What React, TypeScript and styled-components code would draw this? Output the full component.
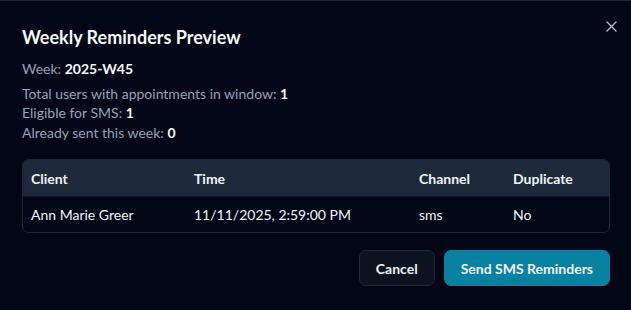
import styled, { createGlobalStyle } from "styled-components";

const Global = createGlobalStyle`
  html, body {
    margin: 0;
    padding: 0;
    background: #020617;
  }
  body {
    font-family: Lato, "Noto Sans", sans-serif;
    color: #f1f5f9;
  }
`;

const Dialog = styled.div`
  position: relative;
  box-sizing: border-box;
  width: 631px;
  height: 310px;
  background: #030617;
  border-top: 1px solid #1e2433;
  padding: 23px 21px 0 22px;
`;

const Close = styled.button`
  position: absolute;
  top: 18px;
  right: 13px;
  width: 14px;
  height: 14px;
  padding: 0;
  border: 0;
  background: transparent;
  color: #b8bfcc;
  display: flex;
  align-items: center;
  justify-content: center;
`;

const Title = styled.h2`
  margin: 0;
  font-size: 18px;
  font-weight: 700;
  line-height: 26px;
  color: #f8fafc;
`;

const Line = styled.p<{ $gap?: number }>`
  margin: ${(p) => p.$gap ?? 0}px 0 0;
  font-size: 14px;
  line-height: 19.5px;
  color: #94a3b8;

  b {
    color: #f8fafc;
    font-weight: 700;
  }
`;

const Table = styled.div`
  margin-top: 17px;
  border: 1px solid #1e293b;
  border-radius: 7px;
  overflow: hidden;
`;

const Row = styled.div<{ $head?: boolean }>`
  display: grid;
  grid-template-columns: 163px 225px 94px 1fr;
  height: ${(p) => (p.$head ? 36 : 35)}px;
  align-items: center;
  background: ${(p) => (p.$head ? "#1e293b" : "transparent")};
  border-bottom: ${(p) => (p.$head ? "1px solid #0f172a" : "none")};
  font-size: 14px;
  font-weight: ${(p) => (p.$head ? 700 : 400)};
  color: #f1f5f9;
`;

const Cell = styled.div`
  padding-left: 8px;
  white-space: nowrap;
`;

const Footer = styled.div`
  display: flex;
  justify-content: flex-end;
  gap: 9px;
  margin-top: 17px;
`;

const Button = styled.button<{ $primary?: boolean }>`
  height: 36px;
  padding: 0 16px;
  border-radius: 7px;
  font-family: inherit;
  font-size: 14px;
  font-weight: 700;
  color: #f1f5f9;
  border: 1px solid ${(p) => (p.$primary ? "#0882a0" : "#1e293b")};
  background: ${(p) => (p.$primary ? "#0882a0" : "#0c1220")};
`;

export default function App() {
  return (
    <>
      <Global />
      <Dialog>
        <Close aria-label="Close">
          <svg width="11" height="11" viewBox="0 0 11 11" fill="none">
            <path d="M1 1L10 10M10 1L1 10" stroke="currentColor" strokeWidth="1.4" strokeLinecap="round" />
          </svg>
        </Close>
        <Title>Weekly Reminders Preview</Title>
        <Line $gap={9}>
          Week: <b>2025-W45</b>
        </Line>
        <Line $gap={5}>
          Total users with appointments in window: <b>1</b>
        </Line>
        <Line>
          Eligible for SMS: <b>1</b>
        </Line>
        <Line>
          Already sent this week: <b>0</b>
        </Line>
        <Table>
          <Row $head>
            <Cell>Client</Cell>
            <Cell>Time</Cell>
            <Cell>Channel</Cell>
            <Cell>Duplicate</Cell>
          </Row>
          <Row>
            <Cell>Ann Marie Greer</Cell>
            <Cell>11/11/2025, 2:59:00 PM</Cell>
            <Cell>sms</Cell>
            <Cell>No</Cell>
          </Row>
        </Table>
        <Footer>
          <Button>Cancel</Button>
          <Button $primary>Send SMS Reminders</Button>
        </Footer>
      </Dialog>
    </>
  );
}
